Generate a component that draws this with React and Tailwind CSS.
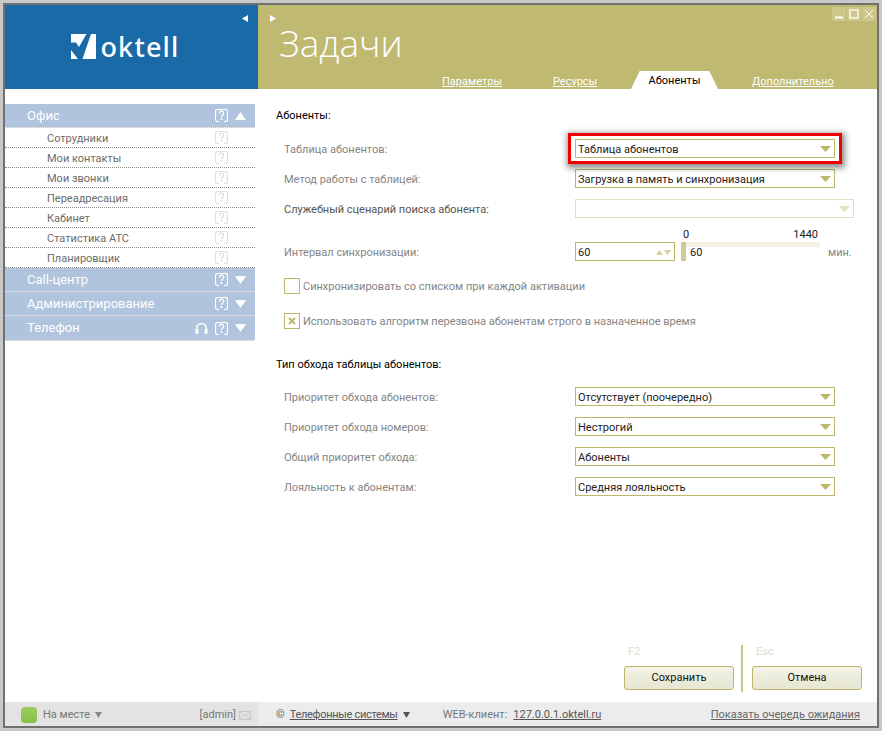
import React from 'react';

const font = { fontFamily: 'Roboto, "Liberation Sans", sans-serif' };

// small help icon used in the left menu
const HelpIcon = ({ className }) => (
    <svg width="13" height="13" viewBox="0 0 13 13" fill="none" className={className}>
        <path d="M4 12.5H2.5a2 2 0 0 1-2-2v-8a2 2 0 0 1 2-2h8a2 2 0 0 1 2 2v8a2 2 0 0 1-2 2H9" stroke="currentColor" strokeWidth="1.200" />
        <path d="M4.5 4.5c0-3 4.2-3 4.2-.2 0 1.800-2.200 1.800-2.200 3.700" stroke="currentColor" strokeWidth="1.300" />
        <rect x="5.700" y="9" width="1.600" height="2" fill="currentColor" />
    </svg>
);

const MenuHeader = ({ title, open, headset, h }) => (
    <div className={`flex items-center bg-[#b0c4de] text-white border-b border-dotted border-[#f2f2f2] pl-[22px] pr-[9px] text-[13px] ${h}`}>
        <span className="flex-1">{title}</span>
        {headset && (
            <svg width="13" height="13" viewBox="0 0 13 13" fill="none" className="mr-[7px]">
                <path d="M1.500 9V6.500a5 5 0 0 1 10 0V9" stroke="currentColor" strokeWidth="1.400" />
                <rect x="0.500" y="7" width="3" height="5" rx="1" fill="currentColor" />
                <rect x="9.500" y="7" width="3" height="5" rx="1" fill="currentColor" />
            </svg>
        )}
        <HelpIcon />
        <svg width="11" height="8" viewBox="0 0 11 8" className="ml-[7px]">
            <path d={open ? 'M5.500 0L11 8H0z' : 'M0 0h11L5.500 8z'} fill="currentColor" />
        </svg>
    </div>
);

const MenuItem = ({ title }) => (
    <div className="flex items-center h-[20px] border-b border-dotted border-[#8a8a8a] pl-[42px] pr-[27px] text-[11px] text-[#6c6c6c]">
        <span className="flex-1 pt-[4px]">{title}</span>
        <HelpIcon className="text-[#d8e2ea]" />
    </div>
);

const Arrow = ({ className = 'text-[#bdb76b]' }) => (
    <svg width="11" height="6" viewBox="0 0 11 6" className={className}>
        <path d="M0 0h11L5.500 6z" fill="currentColor" />
    </svg>
);

const Select = ({ value, disabled, wide }) => (
    <div className={`flex items-center h-[19px] border pl-[2px] pr-[3px] text-[11px] text-[#222] ${wide ? 'w-[279px]' : 'w-[260px]'} ${disabled ? 'border-[#e3e1c4]' : 'border-[#bdb76b]'}`}>
        <span className="flex-1 pt-[4px]">{value}</span>
        <Arrow className={disabled ? 'text-[#e3e1c4]' : 'text-[#bdb76b]'} />
    </div>
);

const Row = ({ label, dark, children }) => (
    <div className="flex items-center h-[19px] mb-[11px]">
        <span className={`w-[299px] pl-[8px] pt-[4px] text-[11px] ${dark ? 'text-[#555]' : 'text-[#858585]'}`}>{label}</span>
        {children}
    </div>
);

const Check = ({ checked, label, className }) => (
    <div className={`flex items-center h-[18px] ml-[8px] ${className}`}>
        <span className="flex items-center justify-center w-[16px] h-[16px] border border-[#bdb76b]">
            {checked && (
                <svg width="8" height="8" viewBox="0 0 8 8">
                    <path d="M1 1l6 6M7 1L1 7" stroke="#bdb76b" strokeWidth="2" />
                </svg>
            )}
        </span>
        <span className="ml-[3px] pt-[2px] text-[11px] text-[#858585]">{label}</span>
    </div>
);

const Button = ({ hint, title }) => (
    <div className="flex flex-col w-[110px]">
        <span className="ml-[4px] mb-[7px] text-[11px] leading-[14px] text-[#dcdcd0]">{hint}</span>
        <button className="h-[24px] rounded-[3px] border border-[#bdb76b] bg-gradient-to-b from-[#f3f3e8] to-[#e6e6d2] text-[11px] text-[#111]">{title}</button>
    </div>
);

export default function App() {
    return (
        <div style={font} className="w-[882px] h-[731px] bg-[#c8c8c8] p-[3px]">
            <div className="flex flex-col h-full bg-white border-2 border-[#707070]">
                {/* header */}
                <div className="flex h-[84px]">
                    <div className="relative flex items-center justify-center w-[253px] bg-[#1a6aa8] pb-[2px] pr-[12px]">
                        <svg width="25" height="25" viewBox="0 0 25 25" className="mr-[4px] text-white">
                            <path d="M0 0h15.500L8 13 5 8.500H0zM20 0h5v25H11.500zM0 16l7 9H0z" fill="currentColor" />
                        </svg>
                        <span className="text-[27px] leading-none font-medium text-white tracking-[1.2px]" style={{ fontFamily: '"Noto Sans", sans-serif' }}>oktell</span>
                        <svg width="6" height="7" viewBox="0 0 6 7" className="absolute top-[10px] right-[10px] text-white">
                            <path d="M6 0v7L0 3.500z" fill="currentColor" />
                        </svg>
                    </div>
                    <div className="relative flex-1 flex flex-col bg-[#c0b972]">
                        <svg width="6" height="7" viewBox="0 0 6 7" className="absolute top-[10px] left-[12px] text-white">
                            <path d="M0 0v7l6-3.500z" fill="currentColor" />
                        </svg>
                        <div className="absolute top-[2px] right-[1px] flex gap-px">
                            {['min', 'max', 'close'].map((k) => (
                                <span key={k} className="flex items-center justify-center w-[14px] h-[14px] bg-[#cdc78b]">
                                    <svg width="10" height="10" viewBox="0 0 10 10" fill="none" stroke="white">
                                        {k === 'min' && <path d="M1 8.500h8" strokeWidth="2" />}
                                        {k === 'max' && <rect x="1" y="1" width="8" height="8" strokeWidth="1.300" />}
                                        {k === 'close' && <path d="M1 1l8 8M9 1l-8 8" />}
                                    </svg>
                                </span>
                            ))}
                        </div>
                        <h1 className="ml-[21px] mt-[15px] text-[37px] leading-[46px] font-light text-white" style={{ fontFamily: '"Open Sans", sans-serif' }}>Задачи</h1>
                        <div className="mt-auto flex items-end h-[18px] pl-[184px] text-[11px] text-white">
                            <span className="underline w-[111px] -mb-[1px]">Параметры</span>
                            <span className="underline w-[78px] -mb-[1px]">Ресурсы</span>
                            <span className="flex items-center justify-center w-[87px] h-[18px] pt-[2px] bg-white text-black [clip-path:polygon(10%_0,90%_0,100%_100%,0_100%)]">Абоненты</span>
                            <span className="underline ml-[34px] -mb-[1px]">Дополнительно</span>
                        </div>
                    </div>
                </div>

                <div className="flex flex-1 min-h-0">
                    {/* left menu */}
                    <div className="w-[253px] pt-[15px] pr-[3px]">
                        <MenuHeader title="Офис" open h="h-[24px]" />
                        <MenuItem title="Сотрудники" />
                        <MenuItem title="Мои контакты" />
                        <MenuItem title="Мои звонки" />
                        <MenuItem title="Переадресация" />
                        <MenuItem title="Кабинет" />
                        <MenuItem title="Статистика АТС" />
                        <MenuItem title="Планировщик" />
                        <MenuHeader title="Call-центр" h="h-[24px]" />
                        <MenuHeader title="Администрирование" h="h-[24px]" />
                        <MenuHeader title="Телефон" headset h="h-[25px]" />
                    </div>

                    {/* form */}
                    <div className="flex-1 flex flex-col pl-[18px] pt-[20px]">
                        <div className="text-[11px] leading-[14px] text-black mb-[16px]">Абоненты:</div>
                        <Row label="Таблица абонентов:">
                            <div className="relative">
                                <Select value="Таблица абонентов" />
                                <div className="absolute -inset-x-[7px] -inset-y-[6px] border-[3px] border-[#f00000] shadow-[1px_2px_6px_2px_rgba(0,0,0,0.45)]"></div>
                            </div>
                        </Row>
                        <Row label="Метод работы с таблицей:">
                            <Select value="Загрузка в память и синхронизация" />
                        </Row>
                        <Row label="Служебный сценарий поиска абонента:" dark>
                            <Select disabled wide value="" />
                        </Row>
                        <div className="flex items-center h-[19px] mt-[13px]">
                            <span className="w-[299px] pl-[8px] pt-[4px] text-[11px] text-[#858585]">Интервал синхронизации:</span>
                            <div className="flex items-center w-[100px] h-[19px] border border-[#bdb76b] pl-[2px] pr-[3px] text-[11px] text-[#222]">
                                <span className="flex-1 pt-[4px]">60</span>
                                <svg width="15" height="6" viewBox="0 0 15 6" className="text-[#d5d1a0]">
                                    <path d="M0 6h7L3.500 1zM8 1h7l-3.500 5z" fill="currentColor" />
                                </svg>
                            </div>
                            <div className="relative ml-[6px] w-[139px] h-[19px]">
                                <div className="absolute -top-[13px] left-[2px] right-[2px] flex justify-between text-[11px] leading-[12px] text-[#222]">
                                    <span>0</span>
                                    <span>1440</span>
                                </div>
                                <div className="h-[5px] bg-[#f3f1e3]"></div>
                                <div className="absolute top-0 left-0 w-[5px] h-[19px] bg-[#cfca98]"></div>
                                <span className="absolute top-[4px] left-[9px] text-[11px] leading-[14px] text-[#222]">60</span>
                            </div>
                            <span className="ml-[8px] pt-[4px] text-[11px] text-[#858585]">мин.</span>
                        </div>
                        <Check className="mt-[16px]" label="Синхронизировать со списком при каждой активации" />
                        <Check className="mt-[17px]" checked label="Использовать алгоритм перезвона абонентам строго в назначенное время" />
                        <div className="mt-[28px] mb-[15px] text-[11px] leading-[14px] text-black">Тип обхода таблицы абонентов:</div>
                        <Row label="Приоритет обхода абонентов:">
                            <Select value="Отсутствует (поочередно)" />
                        </Row>
                        <Row label="Приоритет обхода номеров:">
                            <Select value="Нестрогий" />
                        </Row>
                        <Row label="Общий приоритет обхода:">
                            <Select value="Абоненты" />
                        </Row>
                        <Row label="Лояльность к абонентам:">
                            <Select value="Средняя лояльность" />
                        </Row>
                        <div className="mt-auto mb-[12px] flex items-end justify-end pr-[15px]">
                            <Button hint="F2" title="Сохранить" />
                            <div className="w-[2px] h-[47px] ml-[7px] mr-[9px] -mb-[2px] bg-[#c9c48a]"></div>
                            <Button hint="Esc" title="Отмена" />
                        </div>
                    </div>
                </div>

                {/* status bar */}
                <div className="flex h-[24px] text-[11px] text-[#777]">
                    <div className="flex items-center w-[253px] bg-[#e3e3e3] pl-[16px] pr-[7px] pt-[2px]">
                        <span className="w-[16px] h-[16px] rounded-[4px] bg-gradient-to-b from-[#9ccc63] to-[#86c043]"></span>
                        <span className="ml-[6px]">На месте</span>
                        <svg width="7" height="6" viewBox="0 0 7 6" className="ml-[5px] text-[#888]">
                            <path d="M0 0h7L3.500 6z" fill="currentColor" />
                        </svg>
                        <span className="ml-auto">[admin]</span>
                        <svg width="12" height="9" viewBox="0 0 12 9" fill="none" stroke="#c8c8c8" className="ml-[3px]">
                            <rect x="0.500" y="0.500" width="11" height="8" />
                            <path d="M0.500 0.500L6 5l5.500-4.500M0.500 8.500L4.500 4M11.500 8.500L7.500 4" />
                        </svg>
                    </div>
                    <div className="flex items-center flex-1 bg-[#ececec] pl-[18px] pr-[17px] pt-[2px]">
                        <span className="text-[#555]">©</span>
                        <span className="ml-[5px] underline text-[#555] tracking-[-0.3px]">Телефонные системы</span>
                        <svg width="7" height="6" viewBox="0 0 7 6" className="ml-[5px] text-[#555]">
                            <path d="M0 0h7L3.500 6z" fill="currentColor" />
                        </svg>
                        <span className="ml-[33px]">WEB-клиент:</span>
                        <span className="ml-[6px] underline text-[#555]">127.0.0.1.oktell.ru</span>
                        <span className="ml-auto underline text-[#666]">Показать очередь ожидания</span>
                    </div>
                </div>
            </div>
        </div>
    );
}
